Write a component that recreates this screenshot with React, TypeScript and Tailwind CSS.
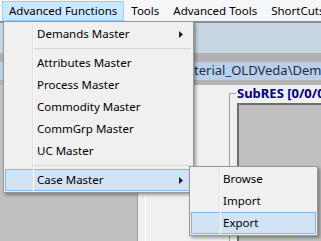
import React from "react";

const font = { fontFamily: '"Noto Sans", "Open Sans", sans-serif' };

function Arrow() {
  return (
    <svg width="4" height="7" viewBox="0 0 4 7" className="block">
      <polygon points="0,0 4,3.5 0,7" fill="#202020" />
    </svg>
  );
}

function Item({ label, hl, arrow }: { label: string; hl?: boolean; arrow?: boolean }) {
  return (
    <div
      className={
        "relative h-[22px] flex items-center pl-[31px] text-[11.5px] text-black border " +
        (hl ? "bg-[#d1e3f5] border-[#84b6e8]" : "border-transparent")
      }
    >
      {label}
      {arrow && (
        <div className="absolute right-[8px] top-[7px]">
          <Arrow />
        </div>
      )}
    </div>
  );
}

function Sep() {
  return (
    <div className="h-[7px] flex items-center">
      <div className="ml-[28px] mr-[1px] h-px flex-1 bg-[#d7d7d7]" />
    </div>
  );
}

export default function App() {
  return (
    <div className="relative w-[321px] h-[241px] overflow-hidden bg-[#c0c0c0]" style={font}>
      {/* menu bar */}
      <div className="h-[21px] bg-[#f5f6f7] flex items-start text-[11.5px] text-black whitespace-nowrap">
        <div className="ml-[2px] mt-[1px] h-[20px] px-[6px] border border-[#99d1ff] bg-[#cce8ff] flex items-center">
          Advanced Functions
        </div>
        <div className="mt-[1px] h-[20px] px-[7px] flex items-center">Tools</div>
        <div className="mt-[1px] h-[20px] px-[7px] flex items-center">Advanced Tools</div>
        <div className="mt-[1px] h-[20px] px-[7px] flex items-center">ShortCuts</div>
      </div>
      {/* background workspace */}
      <div className="h-[2px] bg-[#8e8e8e]" />
      <div className="h-[30px] bg-[#c7d4e1]" />
      <div className="h-[9px] bg-[#b1b1b1]" />
      <div className="h-[18px] bg-[#b9d0e8] flex items-center pl-[194px] text-[13px] text-[#1c2b4a] whitespace-nowrap">
        terial_OLDVeda\Demo
      </div>
      <div className="h-[5px] bg-[#b4b4b4]" />
      <div className="flex h-[156px]">
        <div className="w-[138px] bg-[#c0c0c0] border-r border-[#a0a0a0]" />
        <div className="w-[7px] bg-[#f0f0f0]" />
        <div className="w-px bg-white" />
        <div className="flex-1 bg-[#f0f0f0] flex">
          <div className="w-[83px]" />
          <div className="flex-1 flex flex-col">
            <div className="h-[8px]" />
            <div className="flex-1 border-l border-t border-[#a0a0a0] flex flex-col">
              <div className="h-[1px]" />
              <div className="relative">
                <div className="absolute -top-[9px] left-[6px] bg-[#f0f0f0] px-[1px] text-[13px] font-bold text-[#000080] leading-[15px] whitespace-nowrap">
                  SubRES [0/0/0]
                </div>
              </div>
              <div className="mt-[8px] ml-[7px] flex-1 bg-[#c0c0c0] border-l-2 border-t-2 border-[#6d6d6d]" />
            </div>
          </div>
        </div>
      </div>

      {/* dropdown */}
      <div className="absolute left-[3px] top-[21px] w-[191px] bg-[#f0f0f0] border border-[#979797] p-[1px] shadow-[2px_2px_3px_rgba(0,0,0,0.35)] whitespace-nowrap">
        <div className="absolute left-[28px] top-[1px] bottom-[1px] w-[2px] flex z-10 pointer-events-none">
          <div className="w-px bg-[#dcdcdc] opacity-80" />
          <div className="w-px bg-white opacity-80" />
        </div>
        <Item label="Demands Master" arrow />
        <Sep />
        <Item label="Attributes Master" />
        <Item label="Process Master" />
        <Item label="Commodity Master" />
        <Item label="CommGrp Master" />
        <Item label="UC Master" />
        <Sep />
        <Item label="Case Master" hl arrow />
      </div>

      {/* submenu */}
      <div className="absolute left-[189px] top-[166px] w-[129px] bg-[#f0f0f0] border border-[#979797] p-[1px] shadow-[2px_2px_3px_rgba(0,0,0,0.35)] whitespace-nowrap">
        <div className="absolute left-[29px] top-[1px] bottom-[1px] w-[2px] flex z-10 pointer-events-none">
          <div className="w-px bg-[#dcdcdc] opacity-80" />
          <div className="w-px bg-white opacity-80" />
        </div>
        <Item label="Browse" />
        <Item label="Import" />
        <Item label="Export" hl />
      </div>
    </div>
  );
}
